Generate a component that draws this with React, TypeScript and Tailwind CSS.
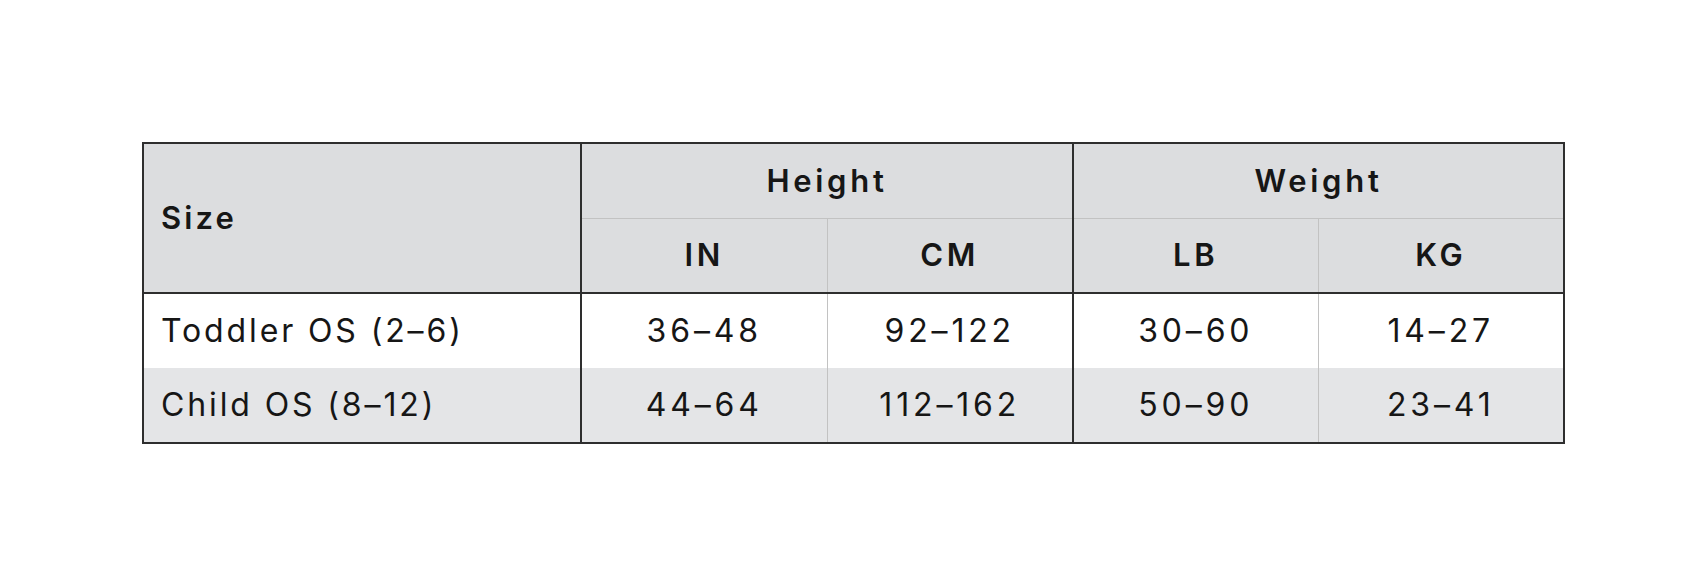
import React from 'react';

const rows = [
  { size: 'Toddler OS (2–6)', values: ['36–48', '92–122', '30–60', '14–27'], bg: 'bg-white' },
  { size: 'Child OS (8–12)', values: ['44–64', '112–162', '50–90', '23–41'], bg: 'bg-[#e4e5e7]' },
];

const dark = 'border-[#2e2e2e]';

export default function App() {
  return (
    <div className="w-[1706px] h-[584px] bg-white pt-[142px] pl-[142px] text-[#161616] font-['Inter','Liberation_Sans',sans-serif]">
      <table className={`table-fixed border-collapse w-[1421px] border-2 ${dark}`}>
        <colgroup>
          <col className="w-[438px]" />
          <col className="w-[246px]" />
          <col className="w-[246px]" />
          <col className="w-[245px]" />
          <col className="w-[246px]" />
        </colgroup>
        <thead className="bg-[#dcdddf]">
          <tr className="h-[75px]">
            <th
              rowSpan={2}
              className={`text-left pl-[17px] text-[31px] font-semibold tracking-[0.1em] border-r-2 border-b-2 ${dark}`}
            >
              Size
            </th>
            <th
              colSpan={2}
              className={`text-center text-[31px] font-semibold tracking-[0.12em] border-r-2 ${dark} border-b border-b-[#c2c2c2]`}
            >
              Height
            </th>
            <th
              colSpan={2}
              className="text-center text-[31px] font-semibold tracking-[0.12em] border-b border-b-[#c2c2c2]"
            >
              Weight
            </th>
          </tr>
          <tr className="h-[75px]">
            {['IN', 'CM', 'LB', 'KG'].map((u, i) => (
              <th
                key={u}
                className={`text-center text-[31px] font-semibold tracking-[0.12em] border-b-2 ${dark} ${
                  i === 1 ? `border-r-2 ${dark}` : i === 3 ? '' : 'border-r border-r-[#c2c2c2]'
                }`}
              >
                {u}
              </th>
            ))}
          </tr>
        </thead>
        <tbody>
          {rows.map((r) => (
            <tr key={r.size} className={`h-[75px] ${r.bg}`}>
              <td className={`pl-[17px] text-[32px] tracking-[0.09em] border-r-2 ${dark}`}>{r.size}</td>
              {r.values.map((v, i) => (
                <td
                  key={i}
                  className={`text-center text-[32px] tracking-[0.12em] ${
                    i === 1 ? `border-r-2 ${dark}` : i === 3 ? '' : 'border-r border-r-[#c2c2c2]'
                  }`}
                >
                  {v}
                </td>
              ))}
            </tr>
          ))}
        </tbody>
      </table>
    </div>
  );
}
